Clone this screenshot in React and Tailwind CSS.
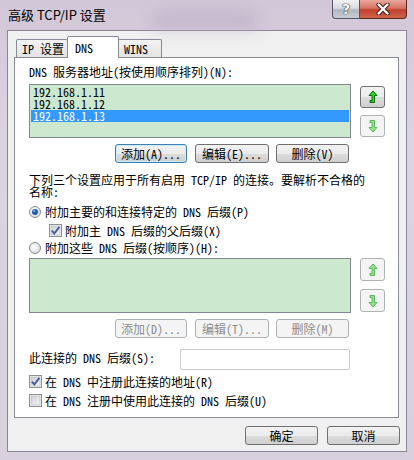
import React from 'react';

// SimSun-like stack: half-width latin, full-width CJK
const sim = "font-['Noto_Sans_Mono_CJK_SC','Liberation_Mono','Noto_Sans_CJK_SC',monospace]";

const Button = ({ children, disabled, focused, className = '' }) => {
  let look = 'border-[#707070] bg-[linear-gradient(#f2f2f2_0%,#ebebeb_50%,#dddddd_50%,#cfcfcf_100%)] text-black';
  if (focused) {
    look = 'border-[#3c7fb1] bg-[linear-gradient(#f2f2f2_0%,#ebebeb_50%,#dddddd_50%,#cfcfcf_100%)] text-black shadow-[inset_0_0_0_1px_#c8ecfc]';
  }
  if (disabled) {
    look = 'border-[#adb2b5] bg-[#f4f4f4] text-[#8d8d8d]';
  }
  return (
    <div className={`flex items-center justify-center rounded-[3px] border text-[12px] leading-[12px] ${look} ${className}`}>
      {children}
    </div>
  );
};

const ArrowUp = ({ disabled }) => (
  <svg width="10" height="14" viewBox="0 0 10 14">
    <path
      d="M5 1 L9 5.5 L6.5 5.5 L6.5 12.5 L2 12.5 L2 10.5 L4 10.5 L4 5.5 L1 5.5 Z"
      fill={disabled ? '#8fe38f' : '#27d627'}
      stroke={disabled ? '#5cb85c' : '#0b6e0b'}
      strokeWidth="1"
      strokeLinejoin="miter"
    />
  </svg>
);

const ArrowDown = ({ disabled }) => (
  <svg width="10" height="14" viewBox="0 0 10 14">
    <path
      d="M2 1.5 L6.5 1.5 L6.5 8.5 L9 8.5 L5 13 L1 8.5 L4 8.5 L4 3.5 L2 3.5 Z"
      fill={disabled ? '#8fe38f' : '#27d627'}
      stroke={disabled ? '#5cb85c' : '#0b6e0b'}
      strokeWidth="1"
      strokeLinejoin="miter"
    />
  </svg>
);

const ArrowButton = ({ children, disabled, className = '' }) => (
  <div
    className={`flex items-center justify-center w-[25px] rounded-[3px] border ${
      disabled
        ? 'border-[#adb2b5] bg-[#f4f4f4]'
        : 'border-[#707070] bg-[linear-gradient(#f2f2f2_0%,#ebebeb_50%,#dddddd_50%,#cfcfcf_100%)]'
    } ${className}`}
  >
    {children}
  </div>
);

const Radio = ({ checked }) => (
  <svg width="12" height="12" viewBox="0 0 12 12" className="shrink-0">
    <defs>
      <radialGradient id={checked ? 'rg1' : 'rg0'} cx="0.4" cy="0.4" r="0.7">
        <stop offset="0" stopColor="#ffffff" />
        <stop offset="1" stopColor="#d4d6da" />
      </radialGradient>
    </defs>
    <circle cx="6" cy="6" r="5.5" fill={`url(#${checked ? 'rg1' : 'rg0'})`} stroke="#8b8d90" />
    {checked && <circle cx="6" cy="6" r="3" fill="#1d5bb0" />}
    {checked && <circle cx="5.2" cy="5" r="1" fill="#8fc2f2" />}
  </svg>
);

const Check = ({ checked }) => (
  <svg width="13" height="13" viewBox="0 0 13 13" className="shrink-0">
    <defs>
      <linearGradient id="cbg" x1="0" y1="0" x2="1" y2="1">
        <stop offset="0" stopColor="#cbcfd5" />
        <stop offset="1" stopColor="#f6f6f6" />
      </linearGradient>
    </defs>
    <rect x="0.5" y="0.5" width="12" height="12" fill="#f4f4f4" stroke="#8e8f8f" />
    <rect x="2" y="2" width="9" height="9" fill="url(#cbg)" stroke="#b5b9c0" strokeWidth="0.6" />
    {checked && (
      <path d="M2.8 6.6 L5.3 9.4 L10.4 2.8" fill="none" stroke="#4a5f97" strokeWidth="1.9" />
    )}
  </svg>
);

const App = () => {
  return (
    <div className="w-[414px] h-[460px] overflow-hidden flex flex-col bg-[linear-gradient(180deg,#d2c7d8_0%,#dcd3e0_30%,#d9d0dd_100%)]">
      {/* Title bar */}
      <div className="h-[30px] flex justify-between items-start shrink-0 relative">
        <div className="absolute left-[150px] top-[10px] w-[110px] h-[20px] rounded-full bg-[#b9aec4] blur-[8px] opacity-60" />
        <div className="ml-[8px] mt-[8px] text-[13px] leading-[14px] text-black font-['Noto_Sans_CJK_SC',sans-serif] relative">
          高级 TCP/IP 设置
        </div>
        <div className="flex mr-[7px] relative">
          <div className="w-[28px] h-[19px] border border-[#505466] border-t-0 rounded-bl-[4px] bg-[linear-gradient(#f1f1f3_0%,#d9dae0_45%,#b4b7c2_55%,#c9ccd5_100%)] flex items-center justify-center">
            <span className="text-[14px] leading-[14px] font-bold text-white font-['DejaVu_Sans',sans-serif] [text-shadow:0_0_1px_#333,0_0_1px_#333,0_0_1px_#333]">?</span>
          </div>
          <div className="w-[47px] h-[19px] border border-[#5a2620] border-t-0 border-l-0 rounded-br-[4px] bg-[linear-gradient(#e8a89c_0%,#d77361_45%,#c0402b_55%,#d0644c_100%)] flex items-center justify-center">
            <svg width="14" height="12" viewBox="0 0 14 12">
              <path d="M2.5 1.5 L11.5 10.5 M11.5 1.5 L2.5 10.5" stroke="#3a1a16" strokeWidth="4.2" strokeLinecap="round" />
              <path d="M2.5 1.5 L11.5 10.5 M11.5 1.5 L2.5 10.5" stroke="#ffffff" strokeWidth="2.4" strokeLinecap="round" />
            </svg>
          </div>
        </div>
      </div>

      {/* Client area */}
      <div className={`mx-[7px] h-[422px] border border-[#8b8596] bg-[#f0f0f0] flex flex-col px-[6px] text-black ${sim}`}>
        {/* Tabs */}
        <div className="mt-[5px] h-[22px] -mb-px flex items-end pl-[2px] relative z-10 text-[12px] leading-[12px]">
          <div className="w-[52px] h-[18px] mb-px border border-b-0 border-[#898c95] bg-[linear-gradient(#f3f3f3,#e3e3e3)] flex items-center pl-[5px] rounded-t-[2px]">
            IP 设置
          </div>
          <div className="w-[52px] h-[22px] -ml-px border border-b-0 border-[#898c95] bg-white flex items-start pt-[5px] pl-[7px] rounded-t-[2px]">
            DNS
          </div>
          <div className="w-[44px] h-[18px] mb-px -ml-px border border-b-0 border-[#898c95] bg-[linear-gradient(#f3f3f3,#e3e3e3)] flex items-center pl-[5px] rounded-t-[2px]">
            WINS
          </div>
        </div>

        {/* Tab panel */}
        <div className="w-[385px] h-[361px] border border-[#898c95] bg-white flex flex-col pl-[14px] pt-[8px] text-[12px] leading-[12px]">
          <div className="h-[12px]">DNS 服务器地址(按使用顺序排列)(N):</div>

          <div className="mt-[6px] flex">
            <div className="w-[322px] h-[54px] border border-[#828790] bg-[#cce8cf] pt-px">
              <div className="h-[12px] pl-[3px]">192.168.1.11</div>
              <div className="h-[12px] pl-[3px]">192.168.1.12</div>
              <div className="h-[12px] pl-[2px] mx-px bg-[#3399ff] text-white">192.168.1.13</div>
            </div>
            <div className="ml-[9px] mt-[2px] flex flex-col gap-[7px]">
              <ArrowButton className="h-[22px]"><ArrowUp /></ArrowButton>
              <ArrowButton className="h-[22px]" disabled><ArrowDown disabled /></ArrowButton>
            </div>
          </div>

          <div className="mt-[6px] ml-[86px] flex">
            <Button focused className="w-[72px] h-[19px]">添加(A)...</Button>
            <Button className="w-[74px] h-[19px] ml-[8px]">编辑(E)...</Button>
            <Button className="w-[73px] h-[19px] ml-[7px]">删除(V)</Button>
          </div>

          <div className="mt-[11px]">
            下列三个设置应用于所有启用 TCP/IP 的连接。要解析不合格的
            <br />
            名称:
          </div>

          <div className="mt-[8px] h-[12px] flex items-center">
            <Radio checked />
            <span className="ml-[4px]">附加主要的和连接特定的 DNS 后缀(P)</span>
          </div>

          <div className="mt-[6px] h-[13px] flex items-center pl-[20px]">
            <Check checked />
            <span className="ml-[3px]">附加主 DNS 后缀的父后缀(X)</span>
          </div>

          <div className="mt-[5px] h-[12px] flex items-center">
            <Radio />
            <span className="ml-[4px]">附加这些 DNS 后缀(按顺序)(H):</span>
          </div>

          <div className="mt-[4px] flex">
            <div className="w-[322px] h-[55px] border border-[#828790] bg-[#cce8cf]" />
            <div className="ml-[9px] flex flex-col gap-[8px]">
              <ArrowButton className="h-[23px]" disabled><ArrowUp disabled /></ArrowButton>
              <ArrowButton className="h-[23px]" disabled><ArrowDown disabled /></ArrowButton>
            </div>
          </div>

          <div className="mt-[6px] ml-[86px] flex">
            <Button disabled className="w-[72px] h-[19px]">添加(D)...</Button>
            <Button disabled className="w-[74px] h-[19px] ml-[8px]">编辑(T)...</Button>
            <Button disabled className="w-[73px] h-[19px] ml-[7px]">删除(M)</Button>
          </div>

          <div className="mt-[11px] flex items-start">
            <div className="w-[151px] mt-[3px]">此连接的 DNS 后缀(S):</div>
            <div className="w-[170px] h-[21px] border border-[#c9cbcf] rounded-[2px] bg-white" />
          </div>

          <div className="mt-[5px] h-[13px] flex items-center">
            <Check checked />
            <span className="ml-[3px]">在 DNS 中注册此连接的地址(R)</span>
          </div>

          <div className="mt-[6px] h-[13px] flex items-center">
            <Check />
            <span className="ml-[3px]">在 DNS 注册中使用此连接的 DNS 后缀(U)</span>
          </div>
        </div>

        {/* Dialog buttons */}
        <div className="mt-[8px] flex justify-end gap-[9px]">
          <Button className="w-[73px] h-[19px]">确定</Button>
          <Button className="w-[73px] h-[19px]">取消</Button>
        </div>
      </div>
    </div>
  );
};

export default App;
